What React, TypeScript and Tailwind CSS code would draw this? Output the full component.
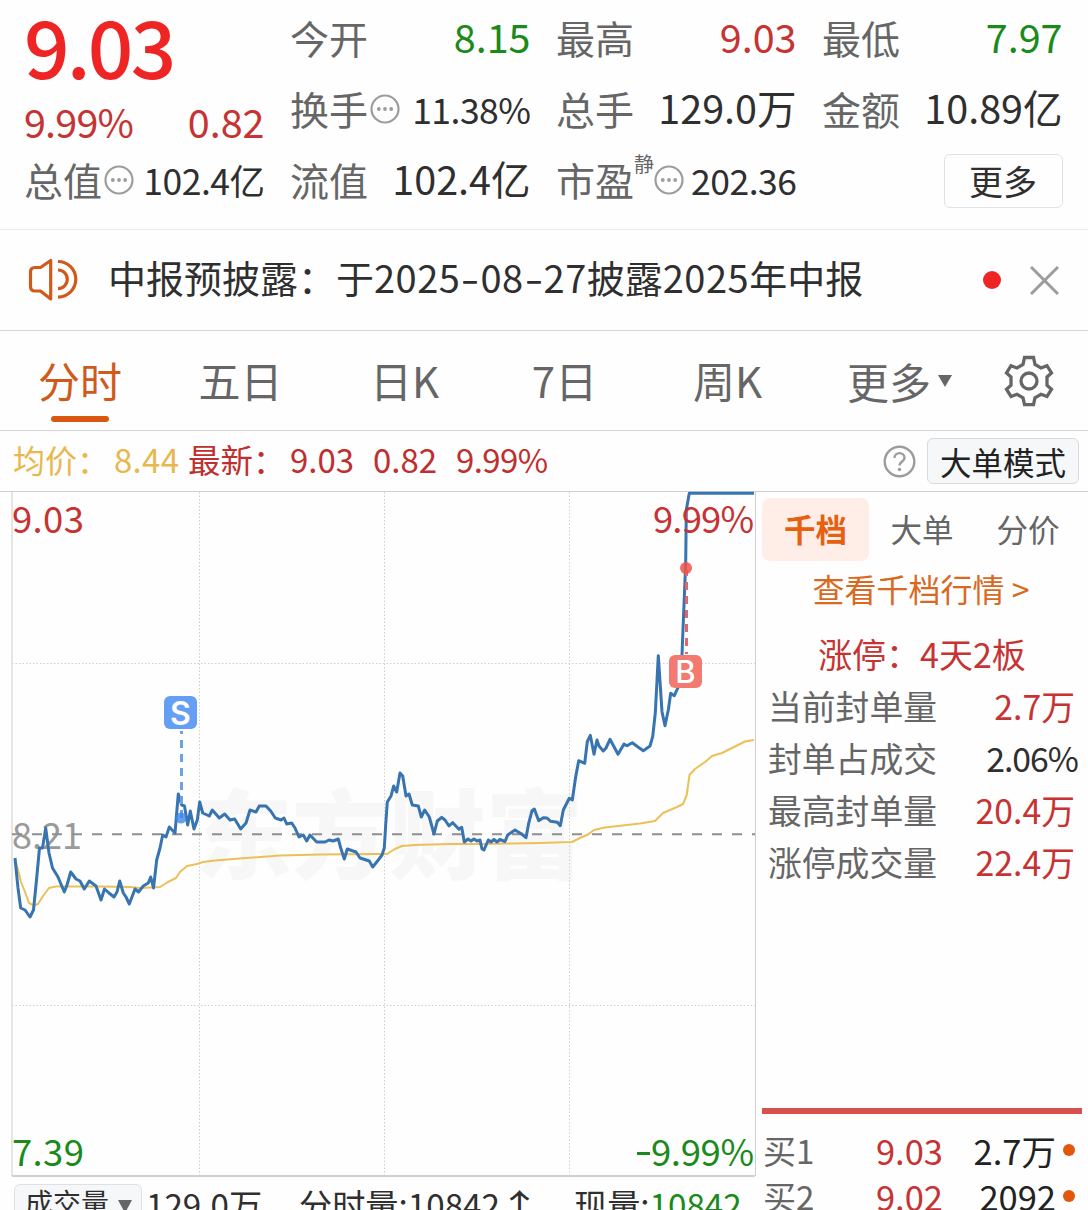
import type { ReactNode } from "react";
import clsx from "clsx";

const PRICE_LINE =
  "15,858 18,888 20.7,908 25,910 30,917 33.5,910 36.5,880 39.5,848 42.5,848 45.7,828 49,853 52.5,868 58,877 64.3,892 67,885 70.7,872 76,879 80,881 84.3,889 89.3,881 96,886 101,900 104.5,889 109,893 114,897 117,892 119.7,881 123.3,893 126,897 129.3,904 135,889 138.5,892 143.3,886 148.3,883 150.7,877 153.5,888 156.7,860 160,848 162.7,835 166,837 169.3,827 175,833 178.3,794 181.7,805 184.5,806 187.7,825 190.3,811 194,829 197.3,820 199.7,802 202.7,813 209.3,816 212.3,810 219.3,818 224.7,814 230,820 234.7,819 240.7,829 246,823 250,810 256,812 259.3,806 266,806 270.7,811 275.3,818 281,820 284,818 286.7,824 291.7,823 295,828 299,837 303.3,835 306.7,841 310,835 316.7,842 325,842 329,840 333.3,841 338.3,839 340.7,848 344.3,859 347.3,849 356,852 360,858 369.3,861 372.7,867 378.3,860 382,855 384.3,848 385.7,825 387.3,802 391,796 393.7,786 396.7,792 400,773 402.7,776 406,796 409,794 412.3,805 418.3,806 421.3,817 424.7,810 429.3,817 434,834 437.3,821 441.7,817.3 445,820 449,826 452.7,822.7 459,829.3 461.7,827.3 464.3,842 468,839 471,841 474,839 477,841 480,840 482,849 484,850 488.3,840 491,842 494,839.5 497,842 500,839.5 505,841.5 507.7,835 515,830 521.7,834 526,837.7 528.7,823.3 532,810.7 534.3,809 538.7,820.7 543.3,817.7 547,818 550.7,821.3 557.3,822.3 560.3,825.7 563.3,810 569.3,798.3 572.3,800 575.7,776.7 578.7,760.7 584.7,763.3 587.3,741.7 590.3,735.3 594,754.3 597,740 599,746 603.3,751 606,748 610,739.3 618,754.3 624,744 627,745.7 632.3,742.7 638,747 643.3,750.7 650,746 652.7,736.7 655.3,713 658.3,655.7 662,711.7 665,725.7 668.3,710 670.7,693.3 674.3,695.7 677.3,689 681,681.7 682.7,636.7 685.7,563 686.3,510 689.3,493.3 754,493.3";

const AVERAGE_LINE =
  "15,860 18,870 21,882 25,892 29,903 34,905.5 38,904 43,896 49,888 56,886.5 100,886.5 130,887 140,888 160,887 168,882 176,878 180,872 187,866 197,864 203,862 215,860.5 240,858.5 280,855.5 320,854.5 375,854 387,854 395,849 402,846 415,845 450,844 480,844 540,843 572,842 580,838 588,834.5 594,830 605,827.5 640,823.5 655,821 663,813 677,807 683,804 686.7,795 689.5,775 695,769 705,762 712,756 722,753 730,749 745,741.5 754,740";

const periods = [
  { label: "分时", width: "w-[160px]" },
  { label: "五日", width: "w-[161px]" },
  { label: "日K", width: "w-[167px]" },
  { label: "7日", width: "w-[153px]" },
  { label: "周K", width: "w-[173px]" },
];

const limitStats = [
  { label: "当前封单量", value: "2.7万", up: true },
  { label: "封单占成交", value: "2.06%", up: false },
  { label: "最高封单量", value: "20.4万", up: true },
  { label: "涨停成交量", value: "22.4万", up: true },
];

const bids = [
  { label: "买1", price: "9.03", volume: "2.7万" },
  { label: "买2", price: "9.02", volume: "2092" },
];

function MoreDots() {
  return (
    <svg className="ml-0.5 w-[30px] h-[30px] shrink-0" viewBox="0 0 30 30">
      <circle cx="15" cy="15" r="13.5" fill="none" stroke="#9c9c9c" strokeWidth="2.2" />
      <circle cx="8.8" cy="15" r="1.9" fill="#9c9c9c" />
      <circle cx="15" cy="15" r="1.9" fill="#9c9c9c" />
      <circle cx="21.2" cy="15" r="1.9" fill="#9c9c9c" />
    </svg>
  );
}

interface StatProps {
  label: ReactNode;
  value: string;
  hint?: boolean;
  valueClass?: string;
}

function Stat({ label, value, hint, valueClass = "text-[#2f2f2f]" }: StatProps) {
  return (
    <div className="flex justify-between items-center h-[71px]">
      <div className="flex items-center">
        <span className="text-[#666] text-[39px]">{label}</span>
        {hint && <MoreDots />}
      </div>
      <span
        className={clsx(
          valueClass,
          hint ? "text-[35.5px] tracking-[-0.5px] pt-px" : "text-[39.5px] pb-[3px]"
        )}
      >
        {value}
      </span>
    </div>
  );
}

function QuoteHeader() {
  return (
    <header className="flex gap-[25.5px] h-[230px] pt-0.5 pl-6 border-[#ececec] border-b">
      <div className="w-[240.5px]">
        <div className="h-[96px] font-medium text-[#ee2524] text-[80px] leading-[85px] tracking-[-2.8px]">
          9.03
        </div>
        <div className="flex justify-between h-[46px] text-[#c63333] text-[39.5px] leading-[45px]">
          <span className="tracking-[-0.8px]">9.99%</span>
          <span>0.82</span>
        </div>
        <Stat label="总值" value="102.4亿" hint />
      </div>
      <div className="w-[240.5px]">
        <Stat label="今开" value="8.15" valueClass="text-[#1b8a1b]" />
        <Stat label="换手" value="11.38%" hint />
        <Stat label="流值" value="102.4亿" />
      </div>
      <div className="w-[240.5px]">
        <Stat label="最高" value="9.03" valueClass="text-[#c63333]" />
        <Stat label="总手" value="129.0万" />
        <Stat
          label={
            <>
              市盈
              <span className="inline-block -mr-0.5 text-[20px] -translate-y-[24px]">静</span>
            </>
          }
          value="202.36"
          hint
        />
      </div>
      <div className="w-[240.5px]">
        <Stat label="最低" value="7.97" valueClass="text-[#1b8a1b]" />
        <Stat label="金额" value="10.89亿" />
        <div className="flex justify-end pt-[10px]">
          <button className="border border-[#dfe3e3] rounded-md w-[119px] h-[54px] text-[#2f2f2f] text-[34px] leading-[46px]">
            更多
          </button>
        </div>
      </div>
    </header>
  );
}

function Notice() {
  return (
    <div className="flex items-center h-[101px] pl-7 pr-[29px] border-[#d6d6d6] border-b">
      <svg className="w-[50px] h-[44px] shrink-0" viewBox="0 0 50 44" fill="none" stroke="#d0591c" strokeWidth="3.2">
        <path d="M22.7 2.5v38.500L12.500 33H7q-4.500 0-4.500-4.500V14q0-4.500 4.500-4.500h5.500z" strokeLinejoin="round" />
        <path d="M30 12a9.300 9.300 0 0 1 0 18.600M30 3.500a17.800 17.800 0 0 1 0 35.600" />
      </svg>
      <p className="flex-1 ml-[30px] h-[54px] text-[#2f2f2f] text-[38px] leading-[47px] whitespace-nowrap">
        中报预披露：于<Digits>2025</Digits>
        <Dash />
        <Digits>08</Digits>
        <Dash />
        <Digits>27</Digits>披露<Digits>2025</Digits>年中报
      </p>
      <span className="bg-[#ee2524] mr-[29px] rounded-full w-[18px] h-[18px]" />
      <svg className="w-[29px] h-[29px]" viewBox="0 0 29 29" stroke="#9c9c9c" strokeWidth="3">
        <path d="M1 1l27 27M28 1L1 28" />
      </svg>
    </div>
  );
}

function Digits({ children }: { children: ReactNode }) {
  return <span className="tracking-[0.5px]">{children}</span>;
}

// wider than the font's own hyphen
function Dash() {
  return <span className="inline-block w-[20px] text-center scale-x-140">-</span>;
}

function PeriodTabs() {
  return (
    <nav className="flex items-center h-[100px] border-[#d6d6d6] border-b text-[#666] text-[42px]">
      {periods.map((period, index) => (
        <div
          key={period.label}
          className={clsx(
            "flex flex-col items-center h-full leading-[98px]",
            period.width,
            index === 0 && "text-[#d0591c]"
          )}
        >
          <span className="h-[85px]">{period.label}</span>
          {index === 0 && <span className="bg-[#d9570f] rounded-full w-[58px] h-[6px]" />}
        </div>
      ))}
      <div className="flex items-center w-[141px] h-full pl-[33px] whitespace-nowrap leading-[98px]">
        更多
        <svg className="ml-[7px] w-[14px] h-[12px] shrink-0" viewBox="0 0 14 12" fill="#666">
          <path d="M0 0h14L7 12z" />
        </svg>
      </div>
      <svg
        className="ml-[49px] w-[50px] h-[52px] shrink-0"
        viewBox="0 0 50 52"
        fill="none"
        stroke="#666"
        strokeWidth="3.300"
      >
        <path d="M20.500 2.500h9L31 9.500l6 3.500 6-2.300 4.500 7.300-4.500 4v8.200l4.500 4-4.500 7.300-6-2.300-6 3.500-1.500 7h-9l-1.500-7-6-3.500-6 2.300-4.500-7.300 4.500-4V22l-4.500-4 4.500-7.300L13 13l6-3.500z" />
        <circle cx="25" cy="26" r="8" />
      </svg>
    </nav>
  );
}

function PriceBar() {
  return (
    <div className="flex items-center h-[60px] pl-[13px] pr-[9px] text-[#c02f2f] text-[33px] leading-[54px] whitespace-nowrap">
      <div className="flex h-full pt-px">
        <span className="w-[101px] text-[#e8b84e] text-[32px]">均价：</span>
        <span className="w-[74px] text-[#e8b84e] tracking-[0.3px]">8.44</span>
        <span className="w-[102px] text-[32.500px]">最新：</span>
        <span className="w-[83px]">9.03</span>
        <span className="w-[83px]">0.82</span>
        <span className="tracking-[-0.6px]">9.99%</span>
      </div>
      <svg className="ml-auto w-[33px] h-[33px]" viewBox="0 0 33 33">
        <circle cx="16.500" cy="16.500" r="14.800" fill="none" stroke="#9c9c9c" strokeWidth="2.400" />
        <path
          d="M11.500 13c0-6.500 10-6.500 10 0 0 3.500-5 3.500-5 7.500"
          fill="none"
          stroke="#9c9c9c"
          strokeWidth="2.400"
        />
        <circle cx="16.500" cy="24.500" r="1.700" fill="#9c9c9c" />
      </svg>
      <button className="bg-[#f6f7f9] ml-[11px] border border-[#d8dadd] rounded-md w-[152px] h-[46px] text-[#222] text-[31.500px] leading-[38px]">
        大单模式
      </button>
    </div>
  );
}

function TimeChart() {
  return (
    <svg className="block w-[756px] h-[686px]" viewBox="0 491 756 686">
      <text x="195" y="871" fontSize="97" fontWeight="900" fill="#f7f7f7">
        东方财富
      </text>
      <g stroke="#cfcfcf" strokeDasharray="1.500 2">
        <path d="M199.500 492v684M384.500 492v684M569.500 492v684M12 663.500h743M12 1005.500h743" />
      </g>
      <path d="M12 491v685" stroke="#dcdcdc" strokeWidth="1.500" />
      <path d="M755.500 491v685" stroke="#cfcfcf" />
      <path d="M12 1176h743" stroke="#d0d0d0" strokeWidth="2" />
      <path d="M0 491.500h756" stroke="#d0d0d0" />
      <text x="12" y="849" fontSize="36" fill="#9a9a9a">
        8.21
      </text>
      <path d="M12 834.300h743" stroke="#8f8f8f" strokeWidth="2" strokeDasharray="10 10" />
      <polyline points={AVERAGE_LINE} fill="none" stroke="#ecc058" strokeWidth="2" strokeLinejoin="round" />
      <polyline points={PRICE_LINE} fill="none" stroke="#3874b0" strokeWidth="3" strokeLinejoin="round" />

      <g fill="#c63333" fontSize="36.500">
        <text x="12" y="533" textLength="72">9.03</text>
        <text x="653" y="533" textLength="101">9.99%</text>
      </g>
      <g fill="#1b8a1b" fontSize="36.500">
        <text x="12" y="1166" textLength="72">7.39</text>
        <text x="651" y="1166" textLength="103">9.99%</text>
        <path d="M637 1153.500h13" stroke="#1b8a1b" strokeWidth="3" />
      </g>

      {/* sell marker */}
      <path d="M181.500 731v87" stroke="#6ba3dd" strokeWidth="3" strokeDasharray="8 6" strokeDashoffset="5" />
      <circle cx="181" cy="818" r="5.500" fill="#3d86e8" opacity="0.8" />
      <rect x="164" y="696" width="33" height="33" rx="6" fill="#659ff5" />
      <text x="180.500" y="724.500" fontSize="32" className="font-['Inter',sans-serif]" fontWeight="600" fill="#fff" textAnchor="middle">
        S
      </text>

      {/* buy marker */}
      <path d="M686.500 570v84" stroke="#e0686a" strokeWidth="3" strokeDasharray="8 6" strokeDashoffset="2" />
      <circle cx="686" cy="568" r="6" fill="#f0514a" opacity="0.85" />
      <rect x="669" y="655" width="33" height="33" rx="6" fill="#f37a70" />
      <text x="685.500" y="683" fontSize="31" className="font-['Inter',sans-serif]" fontWeight="500" fill="#fff" textAnchor="middle">
        B
      </text>
    </svg>
  );
}

function VolumeBar() {
  return (
    <div className="flex h-[34px] pt-[7px] pl-[14px] overflow-hidden text-[#2f2f2f] text-[33.200px] leading-[39px] whitespace-nowrap">
      <div className="flex bg-[#f6f7f9] border border-[#dfe1e4] rounded-md w-[128px] h-[46px] pl-[10px] text-[28px] leading-[34px] shrink-0">
        成交量
        <svg className="mt-[15px] ml-[9px] w-[14px] h-[13px]" viewBox="0 0 14 13" fill="#666">
          <path d="M0 0h14L7 13z" />
        </svg>
      </div>
      <span className="ml-1 w-[153px]">129.0万</span>
      <span className="w-[275px]">
        分时量:10842<span className="inline-block scale-x-125 ml-[3px]">↑</span>
      </span>
      <span>
        现量:<span className="text-[#1b8a1b]">10842</span>
      </span>
    </div>
  );
}

function OrderPanel() {
  return (
    <aside className="flex flex-col flex-1 pl-1.5 border-[#d0d0d0] border-t h-[728px] overflow-hidden">
      <div className="flex mt-1.5 h-[63px] text-[#666] text-[31.500px] leading-[60px]">
        <span className="bg-[#feeee7] rounded-lg w-[107px] font-bold text-[#e85f10] text-center">千档</span>
        <span className="w-[106px] text-center">大单</span>
        <span className="w-[106px] text-center">分价</span>
      </div>
      <div className="pr-2 h-[57px] text-[#d9691f] text-[32px] text-center leading-[55px] whitespace-pre">
        查看千档行情 &gt;
      </div>
      <div className="mt-1 pr-1.5 h-[60px] text-[#c63333] text-[34px] text-center leading-[63px]">
        涨停：4天2板
      </div>
      {limitStats.map((stat) => (
        <div
          key={stat.label}
          className="flex justify-between h-[52px] pr-[13px] pl-1.5 text-[#666] text-[33.800px] leading-[48px]"
        >
          <span>{stat.label}</span>
          <span
            className={clsx(
              stat.up ? "text-[#c63333]" : "text-[#2f2f2f] tracking-[-1px] -mr-[3px]"
            )}
          >
            {stat.value}
          </span>
        </div>
      ))}
      <div className="bg-[#d6504e] mt-auto mb-[13px] w-[320px] h-1.5 shrink-0" />
      {bids.map((bid) => (
        <div key={bid.label} className="flex items-center h-[46px] text-[34.500px] leading-[46px] shrink-0">
          <span className="w-[72px] pl-px text-[#666] text-[33px]">{bid.label}</span>
          <span className="w-[109px] text-[#c63333] text-right">{bid.price}</span>
          <span className="w-[113px] text-[#222] text-right">{bid.volume}</span>
          <span className="bg-[#e2570c] ml-[7px] rounded-full w-3 h-3" />
        </div>
      ))}
    </aside>
  );
}

function App() {
  return (
    <main className="bg-[#fefefe] w-[1088px] h-[1210px] overflow-hidden font-['Noto_Sans_CJK_SC','Noto_Sans',sans-serif]">
      <QuoteHeader />
      <Notice />
      <PeriodTabs />
      <PriceBar />
      <div className="flex">
        <div className="w-[756px]">
          <TimeChart />
          <VolumeBar />
        </div>
        <OrderPanel />
      </div>
    </main>
  );
}

export default App;
